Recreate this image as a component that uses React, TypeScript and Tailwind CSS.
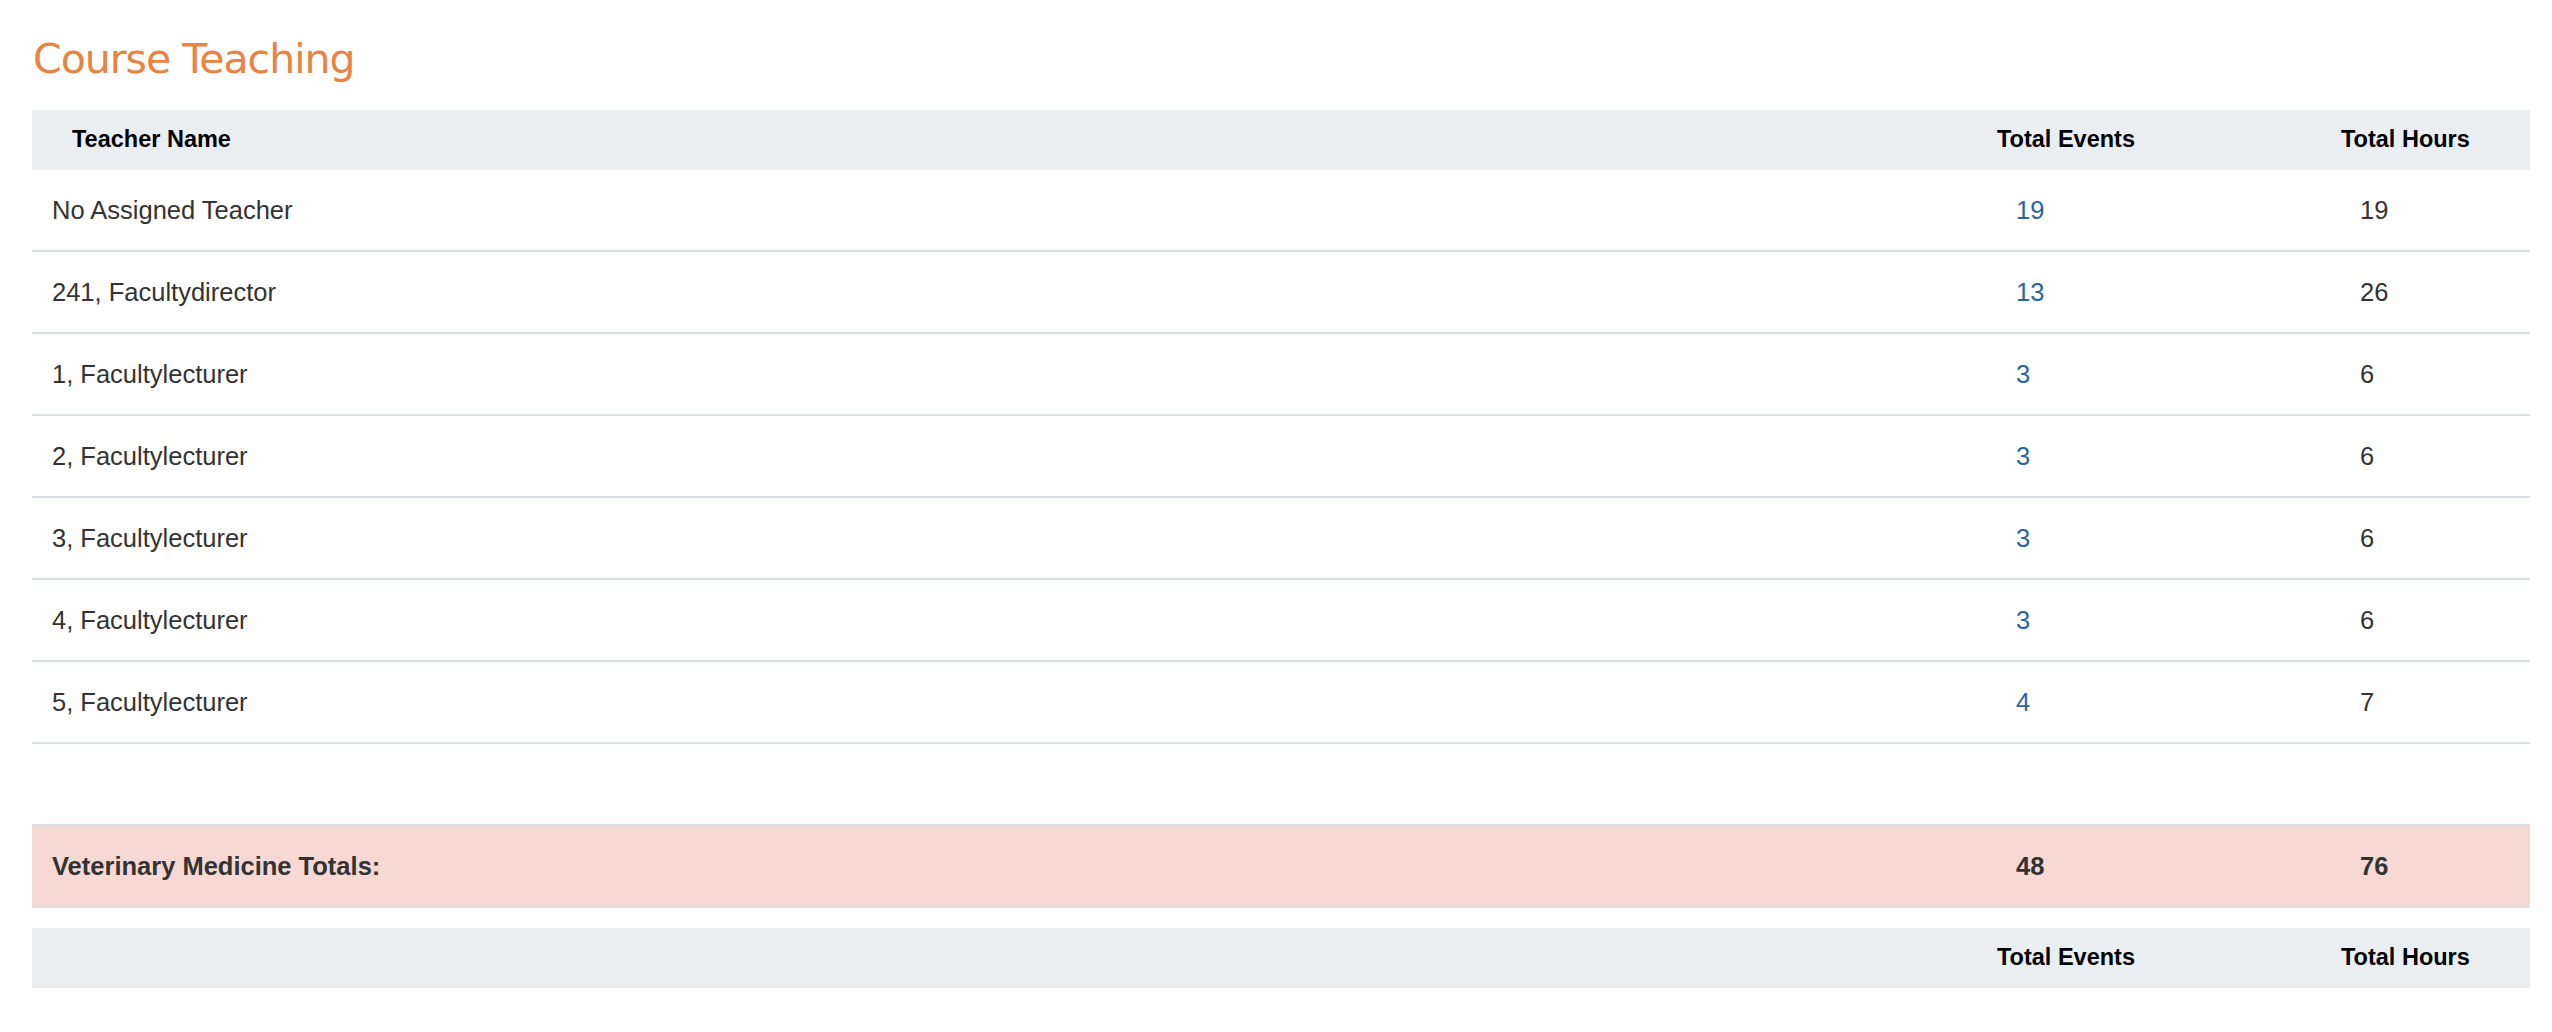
const rows = [
    { name: 'No Assigned Teacher', events: 19, hours: 19 },
    { name: '241, Facultydirector', events: 13, hours: 26 },
    { name: '1, Facultylecturer', events: 3, hours: 6 },
    { name: '2, Facultylecturer', events: 3, hours: 6 },
    { name: '3, Facultylecturer', events: 3, hours: 6 },
    { name: '4, Facultylecturer', events: 3, hours: 6 },
    { name: '5, Facultylecturer', events: 4, hours: 7 },
];

const HeaderRow = ({ showName }: { showName: boolean }) => (
    <div className="grid grid-cols-[1fr_344px_209px] h-[60px] items-center bg-[#EBEEF1] text-[23.5px] font-bold text-black">
        <div className="pl-[40px]">{showName ? 'Teacher Name' : ''}</div>
        <div className="pl-[20px]">Total Events</div>
        <div className="pl-[20px]">Total Hours</div>
    </div>
);

const App: React.FC = () => {
    return (
        <div className="min-h-screen bg-white pl-[32px] pr-[22px] pt-[39px] font-['Liberation_Sans',Arial,sans-serif]">
            <h2 className="font-['DejaVu_Sans',Verdana,sans-serif] text-[41px] leading-none tracking-[-1px] text-[#E8843F] pl-[1px]">Course Teaching</h2>

            <div className="mt-[30px]">
                <HeaderRow showName={true} />

                {rows.map((r) => (
                    <div key={r.name} className="grid grid-cols-[1fr_344px_209px] h-[82px] items-center border-b-2 border-[#DADDE1] text-[25.5px] text-[#333333]">
                        <div className="pl-[20px]">{r.name}</div>
                        <div className="pl-[39px]">
                            <a href="#" className="text-[#2B6698]">{r.events}</a>
                        </div>
                        <div className="pl-[39px]">{r.hours}</div>
                    </div>
                ))}

                <div className="h-[80px]"></div>

                <div className="grid grid-cols-[1fr_344px_209px] h-[84px] items-center border-y-2 border-[#DADDE1] bg-[#F7D9D3] text-[25.5px] font-bold text-[#333333]">
                    <div className="pl-[20px]">Veterinary Medicine Totals:</div>
                    <div className="pl-[39px]">48</div>
                    <div className="pl-[39px]">76</div>
                </div>

                <div className="mt-[20px]">
                    <HeaderRow showName={false} />
                </div>
            </div>
        </div>
    );
};

export default App;
